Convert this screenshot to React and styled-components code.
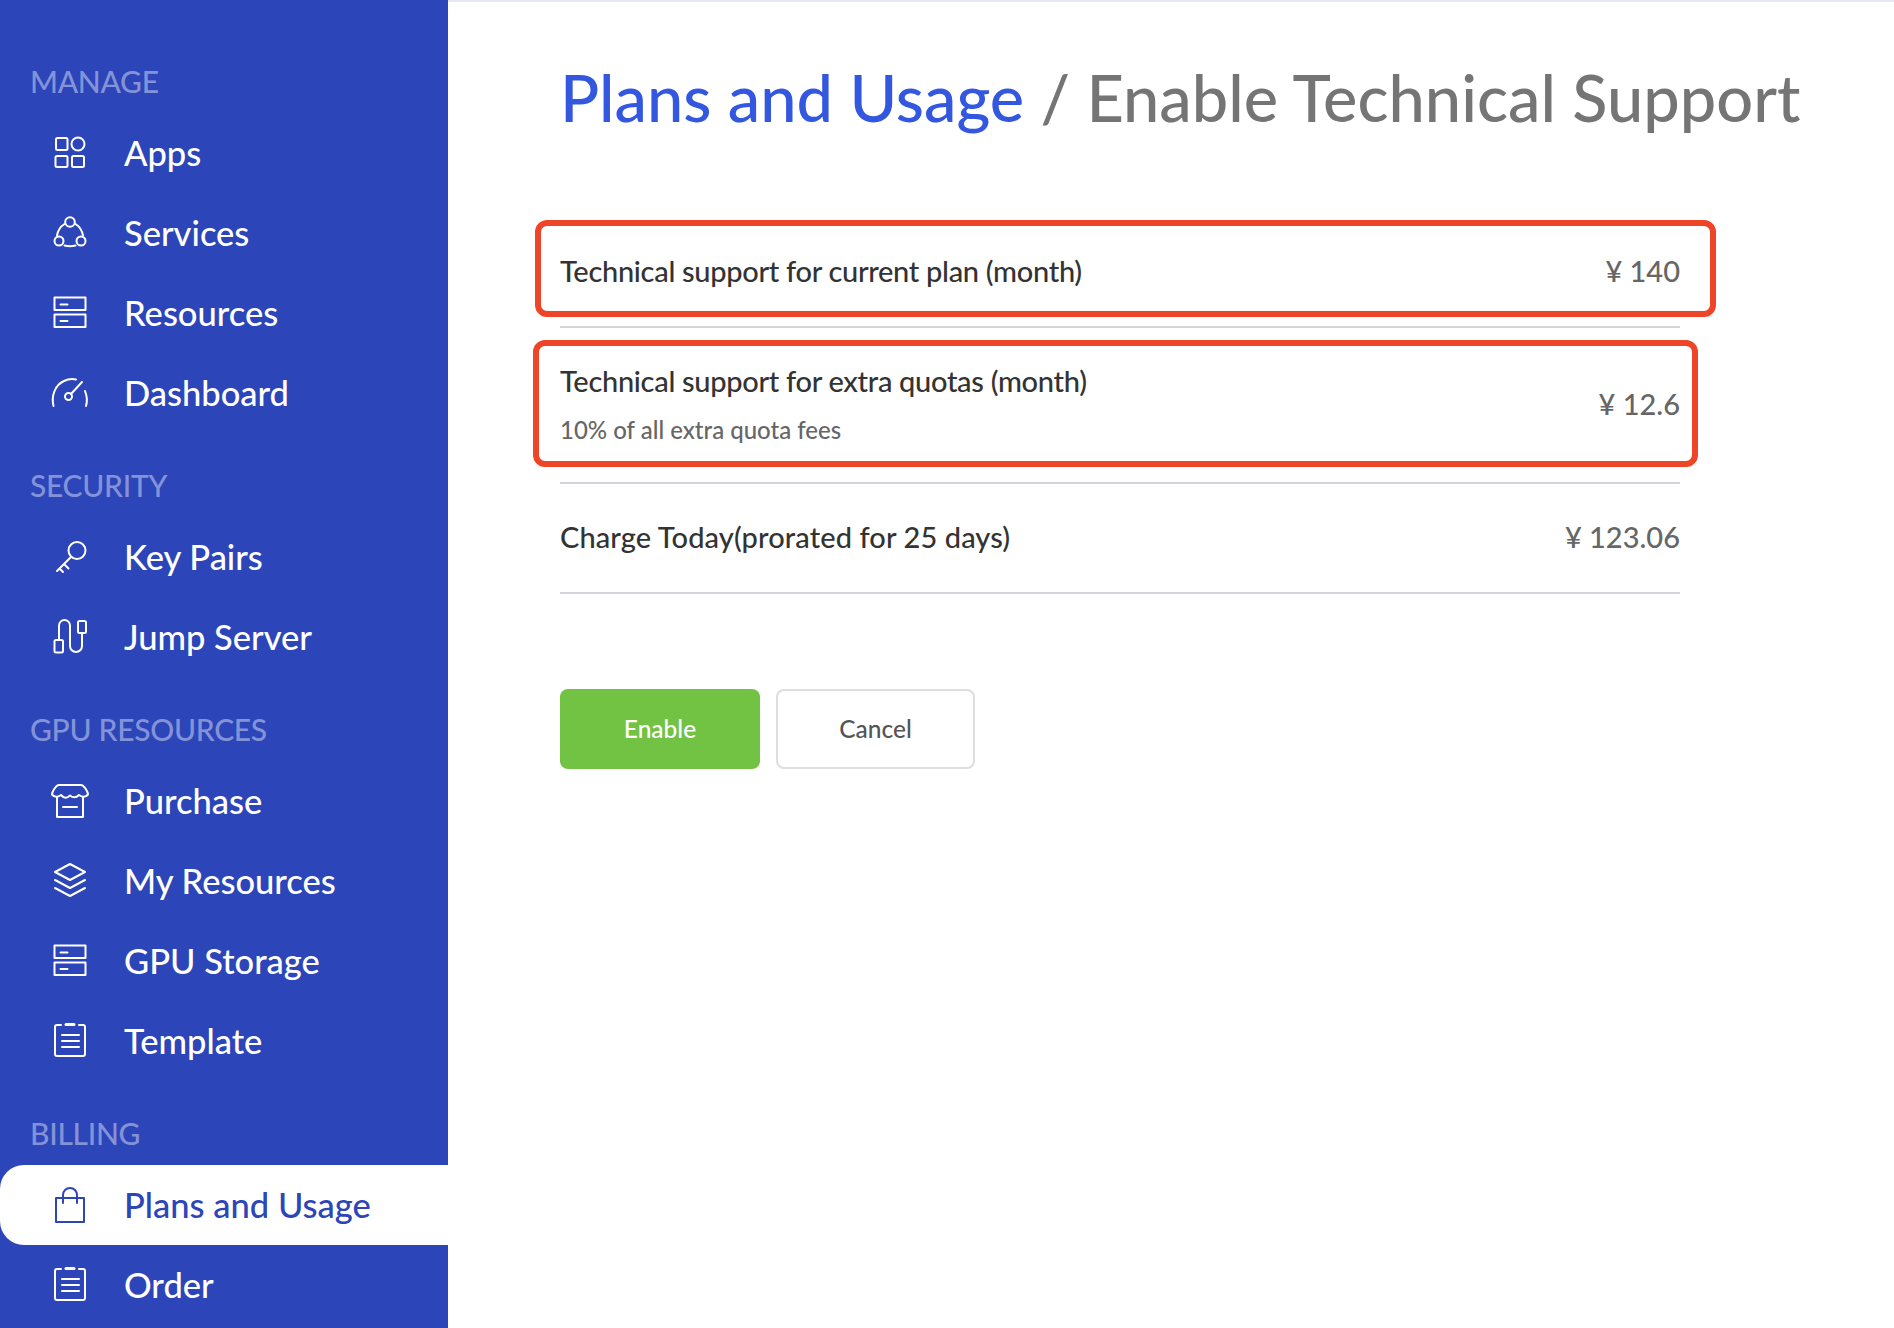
import React from "react";
import styled, { createGlobalStyle } from "styled-components";

const Global = createGlobalStyle`
  html, body { margin: 0; padding: 0; background: #fff; }
  body { font-family: "Lato", "Noto Sans", sans-serif; }
`;
const Page = styled.div`
  display: flex; width: 1894px; height: 1328px; overflow: hidden; background: #fff;
`;
const Sidebar = styled.nav`
  width: 448px; flex: none; background: #2c45b8; padding-top: 65px; box-sizing: border-box;
`;
const Group = styled.section`
  margin-bottom: 36px;
`;
const GroupLabel = styled.div`
  height: 32px; line-height: 32px; margin-bottom: 16px; padding-left: 30px;
  font-size: 30px; font-weight: 500; color: #8493d8; letter-spacing: -0.3px;
`;
const Item = styled.div`
  display: flex; align-items: center; height: 80px; padding: 0 0 1px 50px; box-sizing: border-box;
  border-radius: ${p => (p.$active ? "24px 0 0 24px" : "0")};
  background: ${p => (p.$active ? "#fff" : "transparent")};
  color: ${p => (p.$active ? "#2c45b8" : "#fff")};
  font-size: 34.5px; font-weight: 500;
  svg { flex: none; width: 40px; height: 40px; margin: 0 34px 2px 0; }
`;
const Main = styled.main`
  flex: 1; padding: 52px 0 0 112px; border-top: 2px solid #e3e7f3; box-sizing: border-box;
`;
const Title = styled.h1`
  margin: 0 0 78px 0; font-size: 64.900px; line-height: 86px; font-weight: 500; color: #757575; white-space: nowrap;
  span { color: #3457e0; }
`;
const Table = styled.div`
  width: 1120px;
`;
const Row = styled.div`
  position: relative; display: flex; justify-content: space-between; align-items: center;
  height: ${p => p.$h}px; padding-bottom: 2px; border-bottom: 2px solid #d4d4da; box-sizing: border-box;
`;
const Name = styled.div`
  font-size: 29px; font-weight: 500; color: #333; line-height: 38px; letter-spacing: ${p => p.$track || 0}px;
`;
const Sub = styled.div`
  font-size: 24px; font-weight: 500; color: #666; line-height: 32px; margin-top: 14px;
`;
const Price = styled.div`
  font-size: 29px; font-weight: 500; color: #666; margin-bottom: 1px;
`;
const Highlight = styled.div`
  position: absolute; box-sizing: border-box; border: 6px solid #ee4427; border-radius: 12px;
  left: ${p => p.$l}px; top: ${p => p.$t}px; width: ${p => p.$w}px; height: ${p => p.$h}px;
`;
const Actions = styled.div`
  display: flex; gap: 16px; margin-top: 95px;
`;
const Button = styled.button`
  width: ${p => (p.$primary ? 200 : 199)}px; height: 80px; padding-bottom: 2px; border-radius: 8px; box-sizing: border-box;
  font: 500 24.500px "Lato", sans-serif;
  background: ${p => (p.$primary ? "#72c243" : "#fff")};
  color: ${p => (p.$primary ? "#fff" : "#555")};
  border: ${p => (p.$primary ? "0" : "2px solid #dedede")};
`;

const S = { fill: "none", stroke: "currentColor", strokeWidth: 2, strokeLinejoin: "round", strokeLinecap: "round" };
const Svg = ({ children }) => <svg viewBox="0 0 40 40" overflow="visible" {...S}>{children}</svg>;
const icons = {
  apps: <Svg><rect x="6" y="6" width="11.500" height="12" rx="1.500"/><circle cx="28" cy="12" r="6.500"/><rect x="5.500" y="24" width="12" height="11" rx="1.500"/><rect x="22" y="24" width="12" height="11" rx="1.500"/></Svg>,
  services: <Svg><circle cx="20" cy="10" r="4.800"/><circle cx="9" cy="29" r="4.500"/><circle cx="31" cy="29" r="4.500"/><path d="M7 23.500C8 18 10.500 14.500 14.500 12M25.500 12C29.500 14.500 32 18 33 23.500M14.500 33.500C18 34.500 22 34.500 25.500 33.500"/></Svg>,
  storage: <Svg><rect x="4.500" y="5.500" width="31" height="12.500"/><rect x="4.500" y="22.500" width="31" height="12.500"/><path d="M10.500 12.500h7M10.500 29h7"/></Svg>,
  gauge: <Svg><path d="M3.500 34C1 24 5 13 14 9c4-2 8-2.500 12-1.500M35 19c2 5 2.500 10 1 15"/><circle cx="18.500" cy="24.500" r="3.500"/><path d="M21 22L32 10"/></Svg>,
  key: <Svg><circle cx="27" cy="14.500" r="8.500"/><path d="M21 21L7 35M14 28l4.500 4.500M9.500 32.500l3.500 3.500"/></Svg>,
  jump: <Svg><rect x="4.500" y="24" width="8.500" height="12.500" rx="1.500"/><path d="M9 24V9.500a5.500 5.500 0 0 1 11 0V30a6 6 0 0 0 12 0V17"/><rect x="28" y="5" width="8" height="12" rx="1.500"/></Svg>,
  shop: <Svg><path d="M9 5h22c3 0 7 7 7 9.500-2.500 3-5.500 3-9 .5-3 3-6 3-9 .5-3 3-6 3-9-.5-3.500 2.500-6.500 2.500-9-.5C2 12 6 5 9 5z"/><path d="M7 17v20h26V17M13 27h14"/></Svg>,
  layers: <Svg><path d="M20 4L35 12 20 20 5 12zM5 20l15 8 15-8M5 28l15 8 15-8"/></Svg>,
  list: <Svg><path d="M11 5H7a2 2 0 0 0-2 2v27a2 2 0 0 0 2 2h26a2 2 0 0 0 2-2V7a2 2 0 0 0-2-2h-4M12 15h17M12 21h17M12 27h17"/><path d="M16 4.500h8" strokeWidth="3"/></Svg>,
  bag: <Svg><rect x="6" y="14" width="28" height="24"/><path d="M13 19V11a7 7 0 0 1 14 0v8"/></Svg>,
};
const groups = [
  ["MANAGE", [["Apps","apps"],["Services","services"],["Resources","storage"],["Dashboard","gauge"]]],
  ["SECURITY", [["Key Pairs","key"],["Jump Server","jump"]]],
  ["GPU RESOURCES", [["Purchase","shop"],["My Resources","layers"],["GPU Storage","storage"],["Template","list"]]],
  ["BILLING", [["Plans and Usage","bag",true],["Order","list"]]],
];

export default function App() {
  return (
    <Page>
      <Global />
      <Sidebar>
        {groups.map(([label, items]) => (
          <Group key={label}>
            <GroupLabel>{label}</GroupLabel>
            {items.map(([n, ic, a]) => <Item key={n} $active={a}>{icons[ic]}{n}</Item>)}
          </Group>
        ))}
      </Sidebar>
      <Main>
        <Title><span>Plans and Usage</span> / Enable Technical Support</Title>
        <Table>
          <Row $h={110}>
            <Name $track={-0.3}>Technical support for current plan (month)</Name><Price>¥ 140</Price>
            <Highlight $l={-25} $t={2} $w={1181} $h={97} />
          </Row>
          <Row $h={156}>
            <div><Name $track={-0.3}>Technical support for extra quotas (month)</Name><Sub>10% of all extra quota fees</Sub></div><Price>¥ 12.6</Price>
            <Highlight $l={-27} $t={12} $w={1165} $h={127} />
          </Row>
          <Row $h={110}>
            <Name $track={0.1}>Charge Today(prorated for 25 days)</Name><Price>¥ 123.06</Price>
          </Row>
        </Table>
        <Actions><Button $primary>Enable</Button><Button>Cancel</Button></Actions>
      </Main>
    </Page>
  );
}
